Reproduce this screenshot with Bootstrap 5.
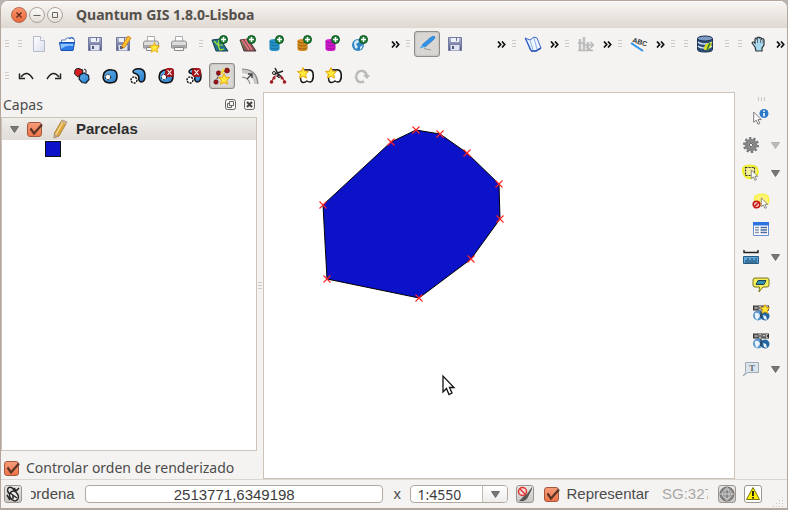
<!DOCTYPE html>
<html lang="es">
<head>
<meta charset="utf-8">
<meta name="viewport" content="width=device-width, initial-scale=1">
<title>Quantum GIS 1.8.0-Lisboa</title>
<link href="https://cdn.jsdelivr.net/npm/bootstrap@5.3.0/dist/css/bootstrap.min.css" rel="stylesheet">
<style>
html,body{height:100%}
body{background:#b9b4b1;color:#4b4b4b;font:14px/20px "Noto Sans",sans-serif;overflow:hidden}
.app{background:#f4f3f2;border:1px solid #b3a79d;border-bottom-width:2px;border-radius:8px 8px 0 0;overflow:hidden}
.titlebar{height:27px;background:linear-gradient(#f8f6f4,#ded8d0);padding-left:10px;box-shadow:inset 0 1px #fdfcfb}
.titlebar h1{font:bold 14px/20px "Noto Sans",sans-serif;color:#55504b;margin:0 0 0 11px}
.win{width:16px;height:16px;padding:0;border:1px solid #aaa39c;border-radius:50%;background:linear-gradient(#fdfcfb,#e2ddd7);display:grid;place-items:center;margin-right:2px}
.win svg{width:12px;height:12px}
.win.quit{background:linear-gradient(#f8926c,#ea693d);border-color:#b5674c}
.tools{height:32px}
.grp{min-width:0}
.grip{width:11px;height:8px;flex:none;padding-left:4px}
.grip::before{content:"";display:block;width:4px;height:8px;background:repeating-linear-gradient(#cfcbc6 0 1px,transparent 1px 3px)}
.grip.across{padding:2px 0 0;width:7px}
.grip.across::before{width:7px;height:4px;background:repeating-linear-gradient(90deg,#c9c5c0 0 1px,transparent 1px 3px)}
.sash .grip{padding:0;width:4px}
.tb{width:28px;height:28px;flex:none;padding:0;border:0;background:none;display:grid;place-items:center}
.tb svg{width:18px;height:18px}
.tb.on{width:26px;height:26px;margin:0 1px;border:1px solid #8f8b86;border-radius:3px;background:#d9d7d4;box-shadow:inset 0 0 2px #a6a29d}
.more{width:14px;height:24px;flex:none;padding:0;border:0;background:none;display:grid;place-items:center}
.more svg{width:9px;height:7px}
.w13{flex:13 0 13px}.w41{flex:41 0 41px}.w53{flex:53 0 53px}.w106{flex:106 0 106px}.w181{flex:181 0 181px}.w207{flex:207 0 207px}
.work{min-height:0}
.dock{flex:0 0 33%;max-width:256px}
.dock header{height:25px;padding:0 2px}
.mini{width:11px;height:11px;padding:0;border:0;background:none;display:block}
.mini svg{width:11px;height:11px;display:block}
.tree{background:#fff;border:1px solid #cdc3b9}
.layer{height:22px;background:linear-gradient(#f0eeeb,#e0dcd7);padding-left:8px;color:#2d2d2d;font:bold 15px/20px "Liberation Sans",sans-serif}
.swatch{width:16px;height:16px;background:#0c12c8;border:1px solid #111;margin:1px 0 0 43px}
.check{appearance:none;width:15px;height:15px;margin:0;flex:none;border:1px solid #a2583d;border-radius:3px;background:linear-gradient(#f69b79,#ee7447)}
.tickbox{display:grid;flex:none}
.tickbox>*{grid-area:1/1}
.tickbox svg{width:17px;height:15px;pointer-events:none}
.tri{width:9px;height:7px;display:block}
.order{height:28px;padding:6px 0 0 3px;gap:5px}
.sash{flex:0 0 6px;display:grid;place-items:center}
.map{background:#fff;border:1px solid #cdc3b9;min-width:0}
.side{flex:0 0 52px;padding-top:3px}
.drop{width:20px;height:28px;padding:0;border:0;background:none;display:grid;place-items:center}
.status{height:29px;border-top:1px solid #dad6d1;padding:0 3px;font:15px/20px "Liberation Sans",sans-serif}
.render-opt{margin:0 5px 0 10px}
.sq{width:18px;height:18px;padding:0;flex:none;border:1px solid #9b9690;border-radius:3px;background:linear-gradient(#e9e7e5,#c9c6c3);display:grid;place-items:center}
.sq svg{width:16px;height:16px}
.sq.warn{background:#fff}
.clip{overflow:hidden;white-space:nowrap;flex:none}
.coord-label{width:45px;text-indent:-3px;margin-left:9px}
.scale-label{width:8px;margin-left:10px}
.field{height:18px;border:1px solid #b2a89e;border-radius:4px;background:#fff;padding:0;color:#3c3c3c;min-width:0}
.coord{text-align:center;margin-left:9px;font:15px/16px "Liberation Sans",sans-serif}
.scale{width:98px;margin-left:9px;display:grid;grid-template-columns:1fr 25px;overflow:hidden;flex:none}
.scale select{grid-area:1/1/2/3;appearance:none;border:0;background:none;padding:0 0 0 6px;height:18px;color:#3c3c3c;font:14px/18px "Noto Sans",sans-serif}
.arrow{grid-area:1/2;height:16px;border-left:1px solid #c3bbb3;background:linear-gradient(#fff,#eeecea);display:grid;place-items:center;pointer-events:none}
.srs{width:46px;color:#a9a7a5;margin:0 10px 0 13px}
.sizer{margin-left:10px}
</style>
<script src="https://cdn.jsdelivr.net/npm/bootstrap@5.3.0/dist/js/bootstrap.bundle.min.js"></script>
</head>
<body>
<svg class="position-absolute" width="0" height="0" aria-hidden="true">
<defs>
<linearGradient id="gb" x2="1" y2="1"><stop stop-color="#62b2f0"/><stop offset="1" stop-color="#2a7fcb"/></linearGradient>
<linearGradient id="gd" y2="1" x2="0"><stop stop-color="#b7bdd8"/><stop offset="1" stop-color="#4a5180"/></linearGradient>
<linearGradient id="gp" x2="1" y2="1"><stop stop-color="#fff"/><stop offset="1" stop-color="#d9dfec"/></linearGradient>
</defs>
<symbol id="more" viewBox="0 0 9 7"><path d="M1 .5 3.700 3.500 1 6.500M5 .5 7.700 3.500 5 6.500" fill="none" stroke="#111" stroke-width="1.700"/></symbol>
<symbol id="tri" viewBox="0 0 9 7"><path d="M.5.5h8L4.500 6.500z" fill="#777" stroke="#5c5c5c" stroke-width=".8"/></symbol>
<symbol id="trioff" viewBox="0 0 9 7"><path d="M.5.5h8L4.500 6.500z" fill="#bbb" stroke="#aaa" stroke-width=".8"/></symbol>
<symbol id="tick" viewBox="0 0 17 15"><path d="M3.500 6.500 7 11.500 15 2.500" fill="none" stroke="#5a3427" stroke-width="2.200"/></symbol>
<symbol id="plus" viewBox="0 0 9 9"><circle cx="4.500" cy="4.500" r="4" fill="#1f8035" stroke="#0c5420"/><path d="M4.500 2v5M2 4.500h5" stroke="#fff" stroke-width="1.500"/></symbol>
<symbol id="star" viewBox="0 0 12 12"><path d="m6 .5 1.600 3.700 4 .3-3 2.700.9 4L6 9.200l-3.500 2 .9-4L.4 4.500l4-.3z" fill="#ffe93b" stroke="#e8a300" stroke-width=".9"/></symbol>
<symbol id="cur" viewBox="0 0 9 13"><path d="M1 1v9.500l2.300-2 1.700 3.800 1.600-.7L5 8h3z" fill="#fff" stroke="#777" stroke-width=".9"/></symbol>
<symbol id="new" viewBox="0 0 18 18"><path d="M3.500 1.500h7l4 4v11h-11z" fill="url(#gp)" stroke="#b4bac8"/><path d="M10.500 1.500v4h4" fill="#fff" stroke="#b4bac8"/></symbol>
<symbol id="open" viewBox="0 0 18 18"><path d="M3.500 8V5h4l1-2h5l3 1.500V8" fill="#fff" stroke="#5f7fb5"/><path d="M11 4q3-3 5 0" fill="none" stroke="#2a61b8" stroke-width="1.200"/><path d="M1.500 7.500h15l-1.500 8H3z" fill="#2d7be8" stroke="#174fae"/><path d="M2.500 9h13l-.6 2Q8 9.500 3 14z" fill="#8ec5ff"/></symbol>
<symbol id="save" viewBox="0 0 18 18"><path d="M2.500 2.500h13v13h-13z" fill="url(#gd)" stroke="#737aa0"/><path d="M5 3h8v4H5z" fill="#eef1f8"/><path d="M4.500 10h9v5.500h-9z" fill="#dfe3ef"/><path d="M6 11h2v3H6z" fill="#535a80"/><path d="M10.500 3v3" stroke="#6d7498"/></symbol>
<symbol id="saveas" viewBox="0 0 18 18"><use href="#save"/><path d="m14 1 3 2-6 9-3 1.500.3-3.500z" fill="#fbc02d" stroke="#cf7b16" stroke-width=".8"/><path d="m8 13.500 1.500-.7-1.200-.9z" fill="#333"/></symbol>
<symbol id="print" viewBox="0 0 18 18"><path d="M5.500 7V1.500h7V7" fill="#fff" stroke="#aaa"/><path d="M1.500 8q0-2 2-2h11q2 0 2 2v5h-15z" fill="#ddd" stroke="#8e8e8e"/><path d="M1.500 10h15v3h-15z" fill="#a7a7a7"/><path d="M4.500 12.500h9v3h-9z" fill="#f7f7f7" stroke="#888"/></symbol>
<symbol id="printnew" viewBox="0 0 18 18"><use href="#print"/><use href="#star" x="7" y="7" width="11" height="11"/></symbol>
<symbol id="vec" viewBox="0 0 18 18"><path d="m1 5 8-1 8 12H5z" fill="#246f8a" stroke="#143f50"/><path d="m3 6 4 4 1-5M7 10l2 5 4-1M7 10l5 0" fill="none" stroke="#a7e62e" stroke-width="1.200"/><use href="#plus" x="8" y="0" width="9" height="9"/></symbol>
<symbol id="ras" viewBox="0 0 18 18"><path d="m1 5 8-1 8 12H5z" fill="#8b4f58" stroke="#4e3135"/><path d="m3 5 7 10m-4-11 7 11" stroke="#e2767d" stroke-width="1.600"/><path d="m1.500 6 5 9" stroke="#508747"/><use href="#plus" x="8" y="0" width="9" height="9"/></symbol>
<symbol id="cyl" viewBox="0 0 18 18"><path d="M2.500 6v8q0 2 5 2t5-2V6" fill="currentColor"/><ellipse cx="7.500" cy="6" rx="5" ry="2" fill="currentColor"/><path d="M2.500 6q1 2 5 2t5-2M2.500 9q1 2 5 2t5-2M2.500 12q1 2 5 2t5-2" fill="none" stroke="#0004"/><use href="#plus" x="8" y="0" width="9" height="9"/></symbol>
<symbol id="wms" viewBox="0 0 18 18"><circle cx="7" cy="10" r="6" fill="#2e83c0"/><path d="M3 8q1-3 4-3l1 2-3 2 2 3-2 2q-2-2-2-6zm6 4 3-2q-1 4-3 5z" fill="#d4ebf8"/><use href="#plus" x="8" y="0" width="9" height="9"/></symbol>
<symbol id="edit" viewBox="0 0 18 18"><path d="m4 10 8-7q3-2.500 4.500-1.500T15 5l-8 7z" fill="#3294e8" stroke="#216fc0" stroke-width=".7"/><path d="m4 10-2.500 3.500L7 12z" fill="#4ba8f3"/><path d="m6 13.500 7 1.500" stroke="#999"/></symbol>
<symbol id="undo" viewBox="0 0 18 18"><path d="M4 10q6-8 12 2" fill="none" stroke="#222" stroke-width="1.500"/><path d="M2.500 6.500v5H8" fill="none" stroke="#222" stroke-width="1.500"/></symbol>
<symbol id="redo" viewBox="0 0 18 18"><g transform="matrix(-1 0 0 1 18 0)"><use href="#undo"/></g></symbol>
<symbol id="simp" viewBox="0 0 18 18"><path d="M2 3q1-2 4-1.500l4 1.500-1 5-4 2-3.500-3z" fill="#d41f22" stroke="#222"/><path d="m7 8 4-2 4.500 2.500.5 4-3 3.500-4-.5L6 12z" fill="url(#gb)" stroke="#123" stroke-width="1.200"/><path d="M11 2l2 1v3" fill="none" stroke="#222"/></symbol>
<symbol id="ring" viewBox="0 0 18 18"><path d="M3 6q3-4 8-3 5 0 5 6 0 6-4 6.500-5 1-8-1Q1 12 3 6z" fill="url(#gb)" stroke="#111" stroke-width="1.600"/><circle cx="7" cy="10" r="2.700" fill="#fff" stroke="#111" stroke-dasharray="2 1"/></symbol>
<symbol id="part" viewBox="0 0 18 18"><path d="M5 3q3-2 7-1 4 1 4 7 0 6-4 6-3-1-2-5Q9 7 5 6 3 5 5 3z" fill="url(#gb)" stroke="#111" stroke-width="1.500"/><circle cx="5" cy="13" r="3" fill="#fff" stroke="#111" stroke-width="1.400" stroke-dasharray="2 1"/></symbol>
<symbol id="del" viewBox="0 0 9 9"><rect width="9" height="9" rx="3" fill="#a3161c"/><path d="m2.500 2 4 5m0-5-4 5" stroke="#fff" stroke-width="1.200"/></symbol>
<symbol id="delring" viewBox="0 0 18 18"><use href="#ring"/><use href="#del" x="8" y="1" width="9" height="9"/></symbol>
<symbol id="delpart" viewBox="0 0 18 18"><use href="#part"/><use href="#del" x="7" y="1" width="9" height="9"/></symbol>
<symbol id="reshape" viewBox="0 0 18 18"><path d="M3 15 6 6l8-3" fill="none" stroke="#333" stroke-dasharray="2 1"/><g fill="#9b1218" stroke="#5b090c" stroke-width=".6"><circle cx="3" cy="15" r="2.200"/><circle cx="5.500" cy="6" r="2.200"/><circle cx="14" cy="3.500" r="2.500"/></g><path d="m8 7 3-5" stroke="#ffdc25" stroke-width="2"/><use href="#star" x="5" y="6" width="12" height="12"/></symbol>
<symbol id="offset" viewBox="0 0 18 18"><path d="M1 2q15 0 16 15h-4Q12 7 1 6z" fill="#c9c9c9"/><path d="M1 2q15 0 16 15M1 10q7 1 8 7" fill="none" stroke="#888" stroke-width="1.200"/><path d="m6 12 5-5m0 4V7H7" stroke="#444" fill="none" stroke-width="1.300"/></symbol>
<symbol id="split" viewBox="0 0 18 18"><path d="m2 15 4-6 6 0 4 6" fill="none" stroke="#9a1e24" stroke-width="1.200"/><g fill="#a01d24"><circle cx="2.500" cy="15" r="1.800"/><circle cx="15.500" cy="15" r="1.800"/><circle cx="5" cy="11" r="1.500"/><circle cx="13" cy="11" r="1.500"/></g><path d="m6 1 4 8M14 4 6 7" stroke="#222" stroke-width="1.500"/><g fill="none" stroke="#222"><circle cx="5" cy="6" r="1.500"/><circle cx="10" cy="9" r="1.500"/></g></symbol>
<symbol id="merge" viewBox="0 0 18 18"><path d="M4 6q2-4 6-3 5-1 6 3 1 5-1 8-2 2-5 0-4 3-6 0-1-3 0-8z" fill="#fff" stroke="#151515" stroke-width="1.500"/><use href="#star" x="0" y="0" width="12" height="12"/></symbol>
<symbol id="rot" viewBox="0 0 18 18"><path d="M11 14.500Q4 17 3 10 4 3 10 4q3 1 4 5" fill="none" stroke="#b9b9b9" stroke-width="2.400"/><path d="M10 8h7l-3 4z" fill="#b9b9b9"/></symbol>
<symbol id="map" viewBox="0 0 18 18"><path d="m1 3 5 2 4-3 3 1 4 10-5 3-5 0z" fill="#eef5ff" stroke="#4669c8"/><path d="m1 3 1 0 6 13-2-1z" fill="#2f63d2"/><path d="m6 5 3 10M10 3l3 11" stroke="#8fb3e8"/><path d="m7 16 5 0 5-3" fill="none" stroke="#3056b2" stroke-width="1.600"/></symbol>
<symbol id="adv" viewBox="0 0 18 18"><path d="M3 4v12M7 2v14M11 7v9" stroke="#c0c0c0" stroke-width="2.500"/><path d="M1 8h4l3 2h8M1 15.500h15M9 12l5 3" fill="none" stroke="#b9b9b9" stroke-width="1.500"/><path d="m13.500 7 3 3-3 3" fill="none" stroke="#b5b5b5" stroke-width="1.300"/></symbol>
<symbol id="db" viewBox="0 0 18 18"><path d="M1.500 3.500v11q0 2.500 7.500 2.500t7.500-2.500v-11" fill="#2c4c78" stroke="#1c2e4e"/><ellipse cx="9" cy="3.500" rx="7.500" ry="2.500" fill="#7d9bc4" stroke="#1c2e4e"/><path d="M2 7q2 2 7 2t7-2M2 11q2 2 7 2t7-2" fill="none" stroke="#dce8f6" stroke-width="1.300"/><path d="M8 15q0-7 5-7l3-1q-1 8-6 8z" fill="#d8dc26"/><path d="M11 16q1-5 3-8" stroke="#2e7c31" stroke-width="1.500" fill="none"/></symbol>
<symbol id="hand" viewBox="0 0 18 18"><path d="m6 16-1-4-3-4q1-2 3 0l0-4q1-2 2 0l.5-1.500q1.500-1 2 .5 2-1 2 1 2-1 2.500 1l0 5-2 3v3z" fill="#a9d9f0" stroke="#333" stroke-width="1.200"/><path d="M7.500 4v4m3-4v4m2.500-3v3" stroke="#555" stroke-width=".8"/></symbol>
<symbol id="ident" viewBox="0 0 18 18"><use href="#cur" x="0" y="3" width="11" height="14"/><circle cx="12" cy="5.500" r="4.500" fill="#2d79c7"/><path d="M12 5v3.500M12 2.500V4" stroke="#fff" stroke-width="1.600"/></symbol>
<symbol id="gear" viewBox="0 0 18 18"><circle cx="9" cy="9" r="6.800" fill="none" stroke="#777" stroke-width="2.400" stroke-dasharray="2.300 1.970"/><circle cx="9" cy="9" r="4.300" fill="#ccc" stroke="#858585" stroke-width="4"/><circle cx="9" cy="9" r="1.700" fill="#e8e8e8" stroke="#666"/></symbol>
<symbol id="sel" viewBox="0 0 18 18"><path d="M2 3q6-3 12 0 3 4 1 8-5 5-11 2-5-5-2-10z" fill="#fff98a" stroke="#eeee25" stroke-width="2"/><path d="M3.500 3.500h9v8h-9z" fill="#f6f099" stroke="#333" stroke-width="1.200" stroke-dasharray="2 1"/><use href="#cur" x="8" y="5" width="9" height="12"/></symbol>
<symbol id="desel" viewBox="0 0 18 18"><path d="M3 4q7-4 13 0 2 4 0 8-7 3-12 0-3-4-1-8z" fill="#fff471" stroke="#f2f021"/><use href="#cur" x="8" y="5" width="9" height="12"/><circle cx="4.500" cy="12.500" r="3.300" fill="#f6c1bb" stroke="#c81816" stroke-width="1.600"/><path d="m2.500 14.500 4-4" stroke="#c81816" stroke-width="1.500"/></symbol>
<symbol id="table" viewBox="0 0 18 18"><path d="M1.500 2.500h15v13h-15z" fill="#fff" stroke="#678fd2"/><path d="M1 2h16v3.500H1z" fill="#2c73e2"/><path d="M3 7.500h4M3 10h4M3 12.500h4" stroke="#8795aa" stroke-width="1.300"/><path d="M8.500 7.500H15M8.500 10H15M8.500 12.500H15" stroke="#4c6d9e" stroke-width="1.300"/></symbol>
<symbol id="meas" viewBox="0 0 18 18"><path d="M2 2v2.500h14V2" fill="none" stroke="#222" stroke-width="1.400"/><path d="M1.500 8.500h15v7h-15z" fill="#5ea9dd" stroke="#285a80"/><path d="M4 15v-3m2 3v-5m2 5v-3m2 3v-5m2 5v-3m2 3v-5" stroke="#173d59"/></symbol>
<symbol id="tip" viewBox="0 0 18 18"><path d="M3 2h12q2 0 2 2v5q0 2-2 2h-4l-4 5 .5-5H3q-2 0-2-2V4q0-2 2-2z" fill="#f6ef57" stroke="#77741c"/><path d="M6 4.500h8l-2 4H4z" fill="#3390b0" stroke="#174459"/></symbol>
<symbol id="home" viewBox="0 0 18 18"><circle cx="6" cy="11.500" r="5" fill="#5795ce"/><circle cx="13" cy="12" r="4.500" fill="#2565a0"/><path d="M3 9q4-1 5 3l-3 4q-3-3-2-7zm8 2 3 1 1 4-3-1z" fill="#e8f3fd"/><path d="M1 1.500h16v5H1z" fill="#333"/><path d="M3 2.500v3m2-3v3M3 4h2m2-1.500h2v3H7zM11 5.500v-3l1 1.500 1-1.500v3m3-3h-1.500v3H16" fill="none" stroke="#ddd" stroke-width=".8"/><path d="M9 7v7" stroke="#222"/></symbol>
<symbol id="homenew" viewBox="0 0 18 18"><use href="#home"/><use href="#star" x="8" y="0" width="10" height="10"/></symbol>
<symbol id="pencil" viewBox="0 0 16 20"><path d="m10 1 5 2-8 14-5 2 .5-5z" fill="#dda93f" stroke="#9b7435" stroke-width=".8"/><path d="m11 3-7.500 13" stroke="#f6d78b" stroke-width="1.500"/><path d="m10 1 5 2-1 2-5-2z" fill="#c9b5a5"/><path d="m2 19 .5-4 4 2z" fill="#bc9f94"/></symbol>
</svg>

<div class="app d-flex flex-column h-100">
  <header class="titlebar d-flex align-items-center flex-shrink-0">
    <button class="win quit" aria-label="Cerrar"><svg viewBox="0 0 12 12"><path d="m3.500 3.500 5 5m0-5-5 5" stroke="#5b2b1d" stroke-width="1.300"/></svg></button>
    <button class="win" aria-label="Minimizar"><svg viewBox="0 0 12 12"><path d="M2.500 6.500h7" stroke="#6b655f"/></svg></button>
    <button class="win" aria-label="Maximizar"><svg viewBox="0 0 12 12"><path d="M3.500 3.500h5v5h-5z" fill="none" stroke="#6b655f"/></svg></button>
    <h1>Quantum GIS 1.8.0-Lisboa</h1>
  </header>

  <div class="tools d-flex align-items-center flex-shrink-0" role="toolbar" aria-label="Principal">
    <div class="grp w13"><div class="grip"></div></div>
    <div class="grp w181 d-flex align-items-center"><div class="grip"></div>
      <button class="tb" aria-label="Nuevo"><svg><use href="#new"/></svg></button>
      <button class="tb" aria-label="Abrir"><svg><use href="#open"/></svg></button>
      <button class="tb" aria-label="Guardar"><svg><use href="#save"/></svg></button>
      <button class="tb" aria-label="Guardar como"><svg><use href="#saveas"/></svg></button>
      <button class="tb" aria-label="Nuevo diseñador"><svg><use href="#printnew"/></svg></button>
      <button class="tb" aria-label="Imprimir"><svg><use href="#print"/></svg></button>
    </div>
    <div class="grp w207 d-flex align-items-center"><div class="grip"></div>
      <button class="tb" aria-label="Añadir capa vectorial"><svg><use href="#vec"/></svg></button>
      <button class="tb" aria-label="Añadir capa ráster"><svg><use href="#ras"/></svg></button>
      <button class="tb" aria-label="Añadir PostGIS"><svg color="#2495cc"><use href="#cyl"/></svg></button>
      <button class="tb" aria-label="Añadir SpatiaLite"><svg color="#d48a1d"><use href="#cyl"/></svg></button>
      <button class="tb" aria-label="Añadir MSSQL"><svg color="#cf18cf"><use href="#cyl"/></svg></button>
      <button class="tb" aria-label="Añadir WMS"><svg><use href="#wms"/></svg></button>
      <button class="more ms-auto" aria-label="Más"><svg><use href="#more"/></svg></button>
    </div>
    <div class="grp w106 d-flex align-items-center"><div class="grip"></div>
      <button class="tb on" aria-label="Edición" aria-pressed="true"><svg><use href="#edit"/></svg></button>
      <button class="tb" aria-label="Guardar ediciones"><svg><use href="#save"/></svg></button>
      <button class="more ms-auto" aria-label="Más"><svg><use href="#more"/></svg></button>
    </div>
    <div class="grp w53 d-flex align-items-center"><div class="grip"></div>
      <button class="tb" aria-label="Mapa"><svg><use href="#map"/></svg></button>
      <button class="more ms-auto" aria-label="Más"><svg><use href="#more"/></svg></button>
    </div>
    <div class="grp w53 d-flex align-items-center"><div class="grip"></div>
      <button class="tb" aria-label="Ráster"><svg><use href="#adv"/></svg></button>
      <button class="more ms-auto" aria-label="Más"><svg><use href="#more"/></svg></button>
    </div>
    <div class="grp w53 d-flex align-items-center"><div class="grip"></div>
      <button class="tb" aria-label="Etiquetado"><svg viewBox="0 0 18 18"><path d="m1 8 12 8" stroke="#2c93ee" stroke-width="2"/><text transform="translate(2 7) rotate(18)" font-family="Liberation Sans" font-size="7" font-weight="bold" fill="#333">ABC</text></svg></button>
      <button class="more ms-auto" aria-label="Más"><svg><use href="#more"/></svg></button>
    </div>
    <div class="grp w13"><div class="grip"></div></div>
    <div class="grp w41 d-flex align-items-center"><div class="grip"></div>
      <button class="tb" aria-label="Base de datos"><svg><use href="#db"/></svg></button>
    </div>
    <div class="grp w13"><div class="grip"></div></div>
    <div class="grp w53 d-flex align-items-center"><div class="grip"></div>
      <button class="tb" aria-label="Desplazar"><svg><use href="#hand"/></svg></button>
      <button class="more ms-auto" aria-label="Más"><svg><use href="#more"/></svg></button>
    </div>
  </div>

  <div class="tools d-flex align-items-center flex-shrink-0" role="toolbar" aria-label="Digitalización avanzada">
    <div class="grip"></div>
    <button class="tb" aria-label="Deshacer"><svg><use href="#undo"/></svg></button>
    <button class="tb" aria-label="Rehacer"><svg><use href="#redo"/></svg></button>
    <button class="tb" aria-label="Simplificar"><svg><use href="#simp"/></svg></button>
    <button class="tb" aria-label="Añadir anillo"><svg><use href="#ring"/></svg></button>
    <button class="tb" aria-label="Añadir parte"><svg><use href="#part"/></svg></button>
    <button class="tb" aria-label="Borrar anillo"><svg><use href="#delring"/></svg></button>
    <button class="tb" aria-label="Borrar parte"><svg><use href="#delpart"/></svg></button>
    <button class="tb on" aria-label="Remodelar" aria-pressed="true"><svg><use href="#reshape"/></svg></button>
    <button class="tb" aria-label="Desplazar curva"><svg><use href="#offset"/></svg></button>
    <button class="tb" aria-label="Dividir"><svg><use href="#split"/></svg></button>
    <button class="tb" aria-label="Combinar"><svg><use href="#merge"/></svg></button>
    <button class="tb" aria-label="Combinar atributos"><svg><use href="#merge"/></svg></button>
    <button class="tb" aria-label="Rotar" disabled><svg><use href="#rot"/></svg></button>
  </div>

  <main class="work d-flex flex-grow-1">
    <aside class="dock d-flex flex-column">
      <header class="d-flex align-items-center">
        <span class="me-auto">Capas</span>
        <button class="mini me-2" aria-label="Flotar"><svg viewBox="0 0 11 11" fill="none" stroke="#666"><rect x=".5" y=".5" width="10" height="10" rx="2"/><path d="M4.500 2.500h4v4h-4zM6.500 6.500v2h-4v-4h2"/></svg></button>
        <button class="mini" aria-label="Cerrar panel"><svg viewBox="0 0 11 11" fill="none" stroke="#666"><rect x=".5" y=".5" width="10" height="10" rx="2"/><path d="m3 3 5 5m0-5-5 5" stroke="#444" stroke-width="2"/></svg></button>
      </header>
      <div class="tree flex-grow-1">
        <div class="layer d-flex align-items-center">
          <svg class="tri me-2"><use href="#tri"/></svg>
          <span class="tickbox"><input class="check" type="checkbox" id="lay" checked><svg><use href="#tick"/></svg></span>
          <svg class="mx-2" width="16" height="20" aria-hidden="true"><use href="#pencil"/></svg>
          <label for="lay">Parcelas</label>
        </div>
        <div class="swatch"></div>
      </div>
      <div class="order d-flex align-items-center">
        <span class="tickbox"><input class="check" type="checkbox" id="ord" checked><svg><use href="#tick"/></svg></span>
        <label for="ord">Controlar orden de renderizado</label>
      </div>
    </aside>
    <div class="sash"><div class="grip"></div></div>
    <section class="map flex-grow-1">
      <svg class="d-block" width="100%" height="100%" role="img" aria-label="Mapa">
        <defs><path id="vx" d="m-3.500-3.500 7 7m0-7-7 7" stroke="#f22" stroke-width="1.100"/></defs>
        <path d="M59 112 127 49 152 37 176 41 203 60 235 91 236 126 207 166 155 205 63 186z" fill="#0c12c8" stroke="#000" stroke-width="1"/>
        <use href="#vx" x="59" y="112"/><use href="#vx" x="127" y="49"/><use href="#vx" x="152" y="37"/><use href="#vx" x="176" y="41"/><use href="#vx" x="203" y="60"/><use href="#vx" x="235" y="91"/><use href="#vx" x="236" y="126"/><use href="#vx" x="207" y="166"/><use href="#vx" x="155" y="205"/><use href="#vx" x="63" y="186"/>
        <path d="M179 283v16l3.500-3.500 2.500 6 3-1.500-2.500-5.500h4.500z" fill="#fff" stroke="#111" stroke-width="1.300"/>
      </svg>
    </section>
    <nav class="side d-flex flex-column align-items-center" aria-label="Atributos">
      <div class="grip across"></div>
      <button class="tb" aria-label="Identificar"><svg><use href="#ident"/></svg></button>
      <div class="d-flex"><button class="tb" aria-label="Acción"><svg><use href="#gear"/></svg></button><button class="drop" aria-label="Acciones"><svg class="tri"><use href="#trioff"/></svg></button></div>
      <div class="d-flex"><button class="tb" aria-label="Seleccionar"><svg><use href="#sel"/></svg></button><button class="drop" aria-label="Modos de selección"><svg class="tri"><use href="#tri"/></svg></button></div>
      <button class="tb" aria-label="Deseleccionar"><svg><use href="#desel"/></svg></button>
      <button class="tb" aria-label="Tabla de atributos"><svg><use href="#table"/></svg></button>
      <div class="d-flex"><button class="tb" aria-label="Medir"><svg><use href="#meas"/></svg></button><button class="drop" aria-label="Modos de medida"><svg class="tri"><use href="#tri"/></svg></button></div>
      <button class="tb" aria-label="Avisos del mapa"><svg><use href="#tip"/></svg></button>
      <button class="tb" aria-label="Nuevo marcador"><svg><use href="#homenew"/></svg></button>
      <button class="tb" aria-label="Marcadores"><svg><use href="#home"/></svg></button>
      <div class="d-flex"><button class="tb" aria-label="Anotación"><svg viewBox="0 0 18 18"><path d="M3.500 2.500h13v10H6L1 16l2.500-3.500z" fill="#dce5eb" stroke="#9eabb3"/><text x="7" y="11" font-family="Liberation Serif" font-size="9" font-weight="bold" fill="#64717a">T</text></svg></button><button class="drop" aria-label="Anotaciones"><svg class="tri"><use href="#tri"/></svg></button></div>
    </nav>
  </main>

  <footer class="status d-flex align-items-center flex-shrink-0">
    <button class="sq" aria-label="Extensión"><svg viewBox="0 0 16 16" fill="none" stroke="#222" stroke-width="1.500"><ellipse cx="6" cy="5" rx="3" ry="4" transform="rotate(-35 6 5)"/><ellipse cx="9" cy="10" rx="4" ry="5" fill="#eee" transform="rotate(-35 9 10)"/><path d="m5 7 7 5M9 2l2 3 3-3M2 9l3 5M8 9v4"/></svg></button>
    <label class="clip coord-label" for="xy">ordena</label>
    <input class="field coord flex-grow-1" id="xy" value="2513771,6349198">
    <label class="clip scale-label" for="sc">x</label>
    <div class="field scale"><select id="sc"><option>1:4550</option></select><span class="arrow"><svg class="tri"><use href="#tri"/></svg></span></div>
    <button class="sq ms-2" aria-label="Detener"><svg viewBox="0 0 16 16"><path d="m15 1-5 7-3 2-5 5q7 1 9-4l4-8z" fill="#555"/><circle cx="5.500" cy="5.500" r="4" fill="#f5dddd" stroke="#d33" stroke-width="1.500"/><path d="m2.500 2.500 6 6" stroke="#d33" stroke-width="1.400"/></svg></button>
    <span class="tickbox render-opt"><input class="check" type="checkbox" id="rep" checked><svg><use href="#tick"/></svg></span>
    <label for="rep">Representar</label>
    <span class="clip srs">SG:327</span>
    <button class="sq" aria-label="Proyección"><svg viewBox="0 0 16 16"><circle cx="8" cy="8" r="7" fill="#888" stroke="#666"/><g fill="none" stroke="#ccc"><circle cx="8" cy="8" r="4.500"/><ellipse cx="8" cy="8" rx="2" ry="6.500"/><path d="M1 8h14"/></g></svg></button>
    <button class="sq warn ms-2" aria-label="Avisos"><svg viewBox="0 0 16 16"><path d="m8 1.500 6.500 12h-13z" fill="#ffef00" stroke="#77760a" stroke-linejoin="round"/><path d="M8 5v5M8 11v1.500" stroke="#111" stroke-width="1.800"/></svg></button>
    <svg class="sizer align-self-end" width="12" height="12" aria-hidden="true"><path d="M1 10.500h11M4 7.500h8M7 4.500h5M10 1.500h2" stroke="#c9c5c1" stroke-dasharray="1 2"/></svg>
  </footer>
</div>
</body>
</html>
